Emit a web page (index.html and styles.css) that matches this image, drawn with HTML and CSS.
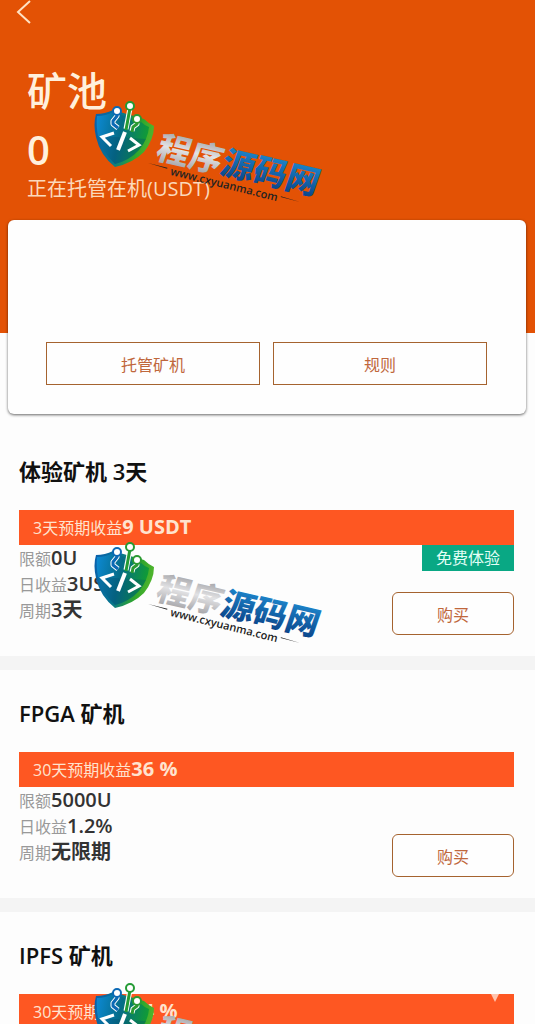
FILE: index.html
```
<!DOCTYPE html>
<html lang="zh-CN">
<head>
    <title>矿池</title>
    <meta charset="utf-8" />
    <meta name="viewport" content="width=device-width, initial-scale=1.0" />
    <link rel="stylesheet" href="styles.css">
</head>
<body>
<!--头部-->
<header class="hero">
    <a href="#" class="back" aria-label="返回">
        <svg width="16" height="24" viewBox="0 0 16 24"><path d="M15 1L3 12l12 11"/></svg>
    </a>
    <h1 class="hero-title">矿池</h1>
    <div class="hero-num">0</div>
    <div class="hero-sub">正在托管在机(USDT)</div>
</header>
<div class="panel">
    <button type="button" class="panel-btn">托管矿机</button>
    <button type="button" class="panel-btn">规则</button>
</div>

<!--矿机列表-->
<main class="list">
    <section class="item">
        <h2 class="item-title">体验矿机 3天</h2>
        <div class="banner"><span>3天预期收益<b>9 USDT</b></span></div>
        <div class="item-body">
            <ul class="info">
                <li>限额<b>0U</b></li>
                <li>日收益<b>3USDT</b></li>
                <li>周期<b>3天</b></li>
            </ul>
            <div class="side">
                <span class="tag">免费体验</span>
                <button type="button" class="buy">购买</button>
            </div>
        </div>
    </section>
    <section class="item">
        <h2 class="item-title">FPGA 矿机</h2>
        <div class="banner"><span>30天预期收益<b>36 %</b></span></div>
        <div class="item-body">
            <ul class="info">
                <li>限额<b>5000U</b></li>
                <li>日收益<b>1.2%</b></li>
                <li>周期<b>无限期</b></li>
            </ul>
            <div class="side">
                <button type="button" class="buy">购买</button>
            </div>
        </div>
    </section>
    <section class="item">
        <h2 class="item-title">IPFS 矿机</h2>
        <div class="banner">
            <span>30天预期收益<b>54 %</b></span>
            <svg class="arrow" width="8" height="8" viewBox="0 0 8 8"><path d="M0 0h8L4 8z"/></svg>
        </div>
    </section>
</main>

<!--水印-->
<div class="marks" aria-hidden="true">
    <svg class="mark" viewBox="0 0 240 110">
        <defs>
            <linearGradient id="g-shield" x1="0" y1="0" x2="1" y2="0.2">
                <stop offset="0" stop-color="#0a5fae"/>
                <stop offset="0.45" stop-color="#07758f"/>
                <stop offset="0.8" stop-color="#2fa52c"/>
                <stop offset="1" stop-color="#4cb32c"/>
            </linearGradient>
            <linearGradient id="g-inner" x1="0" y1="0" x2="1" y2="0.2">
                <stop offset="0" stop-color="#0d8ad6"/>
                <stop offset="0.5" stop-color="#056c88"/>
                <stop offset="1" stop-color="#109a38"/>
            </linearGradient>
            <linearGradient id="g-grey" x1="0" y1="0" x2="0" y2="1">
                <stop offset="0.1" stop-color="#98989c"/>
                <stop offset="0.5" stop-color="#e2e2e4"/>
                <stop offset="0.9" stop-color="#a2a2a6"/>
            </linearGradient>
            <linearGradient id="g-blue" x1="0" y1="0" x2="0" y2="1">
                <stop offset="0.2" stop-color="#1c83c9"/>
                <stop offset="0.9" stop-color="#0a4287"/>
            </linearGradient>
            <g id="logo">
                <path fill="url(#g-shield)" d="M7 15Q16 15 24 11L55 20Q59 24 65 27Q65 40 55 53Q44 64 26 68Q11 56 7 38Q4 25 7 15z"/>
                <path fill="url(#g-inner)" d="M8 17Q17 17 24 13L51 22Q55 26 60 28Q59 40 50 51Q41 61 26 65Q13 53 9 37Q7 26 8 17z"/>
                <path fill="#034a6c" opacity=".3" d="M9 37L57 40Q54 47 50 51Q41 61 26 65Q13 53 9 37z"/>
                <g fill="none" stroke="#fff" stroke-width="5" stroke-linejoin="round">
                    <path d="M28 13V17L24 22V25L29 29"/><path d="M41 9L37 30"/><path d="M48 21V25L44 28L43 32"/>
                </g>
                <g fill="none" stroke-width="3" stroke-linejoin="round">
                    <path stroke="#0b69b5" d="M28 13V17L24 22V25L29 29"/><path stroke="#249b35" d="M41 9L37 31"/><path stroke="#2c9a32" d="M48 21V25L44 28L43 33"/>
                </g>
                <g fill="#fff" stroke-width="2">
                    <circle cx="28" cy="12" r="4" stroke="#0b69b5"/><circle cx="41" cy="7" r="4" stroke="#249b35"/><circle cx="48" cy="20" r="4" stroke="#2c9a32"/>
                </g>
                <path fill="none" stroke="#fff" stroke-width="3" d="M25 34L13 38L22 47M39 52L50 46L41 39"/>
                <path stroke="#fff" stroke-width="4" d="M36 33L29 51"/>
                <g transform="translate(65 60) rotate(13) skewX(-6)">
                    <text class="mark-name" x="0" y="-1" fill="url(#g-grey)">程序</text>
                    <text class="mark-name" x="66" y="-1" fill="url(#g-blue)">源码网</text>
                </g>
                <g transform="translate(59 64) rotate(14)" fill="#222">
                    <path d="M0 0H20V1zM137 0L157 1H137z"/>
                    <text class="mark-url" x="24" y="6">www.cxyuanma.com</text>
                </g>
            </g>
        </defs>
        <use href="#logo"/>
    </svg>
    <svg class="mark" viewBox="0 0 240 110"><use href="#logo"/></svg>
    <svg class="mark" viewBox="0 0 240 110"><use href="#logo"/></svg>
</div>
</body>
</html>
```
FILE: styles.css
```
*{box-sizing: border-box;}
body{
    position: relative;
    height: 100vh;
    margin: 0;
    overflow: hidden;
    background-color: #fdfdfd;
    font-family: "Open Sans", "Noto Sans CJK SC", sans-serif;
    font-size: 16px;
}
h1,h2,ul{margin: 0;padding: 0;}
ul{list-style: none;}
button{
    padding: 0;
    font-family: inherit;
    font-size: 16px;
    color: #c0673c;
    background-color: #fefefe;
    border: 1px solid #a5632f;
    cursor: pointer;
}

/*hero*/
.hero{
    padding: 0 27px 134px;
    background-color: #e35205;
    color: #fff0dc;
}
.back{
    display: block;
    width: 16px;
    height: 24px;
    margin-left: -12px;
}
.back svg{display: block;}
.back path{
    fill: none;
    stroke: #ffe2c4;
    stroke-width: 2;
}
.hero-title{
    padding-top: 37px;
    font-size: 40px;
    line-height: 60px;
    font-weight: 500;
}
.hero-num{
    font-size: 40px;
    line-height: 58px;
    font-weight: 600;
}
.hero-sub{
    color: #fbd9bb;
    font-size: 20px;
    line-height: 20px;
}

/*panel*/
.panel{
    position: relative;
    display: flex;
    gap: 13px;
    margin: -113px 9px 14px 8px;
    padding: 122px 39px 29px 38px;
    border-radius: 6px;
    background-color: #fefefe;
    box-shadow: 0 1px 3px rgba(0,0,0,.6);
}
.panel-btn{
    flex: 1;
    height: 43px;
}

/*list*/
.item{
    padding: 27px 21px 21px 19px;
    border-bottom: 14px solid #f4f4f4;
}
.item-title{
    margin-bottom: 23px;
    font-size: 22px;
    line-height: 32px;
    font-weight: 600;
    color: #111;
}
.banner{
    display: flex;
    justify-content: space-between;
    height: 35px;
    padding: 0 14px;
    background-color: #fe5722;
    color: #ffe3cf;
    line-height: 34px;
}
.banner b{font-size: 20px;}
.arrow{
    margin-right: 1px;
    fill: #ffc4ae;
}
.item-body{
    display: flex;
    justify-content: space-between;
}
.info{
    padding-bottom: 12px;
    color: #999;
}
.info li{
    height: 26px;
    line-height: 26px;
}
.info b{
    font-size: 20px;
    font-weight: 600;
    color: #333;
}
.side{
    display: flex;
    flex-direction: column;
    align-items: flex-end;
}
.tag{
    padding: 0 14px;
    background-color: #09a884;
    color: #e4fff6;
    line-height: 26px;
}
.buy{
    width: 122px;
    height: 43px;
    margin-top: auto;
    border-radius: 6px;
}

/*watermark*/
.marks{
    position: absolute;
    top: 99px;
    left: 89px;
    display: flex;
    flex-direction: column;
    gap: 331px;
    pointer-events: none;
}
.mark{
    width: 240px;
    height: 110px;
    flex-shrink: 0;
}
.mark-name{
    font-family: "Noto Sans CJK SC", sans-serif;
    font-size: 33px;
    font-weight: 900;
}
.mark-url{
    font-family: "Open Sans", sans-serif;
    font-size: 11px;
    font-weight: 600;
}
```
